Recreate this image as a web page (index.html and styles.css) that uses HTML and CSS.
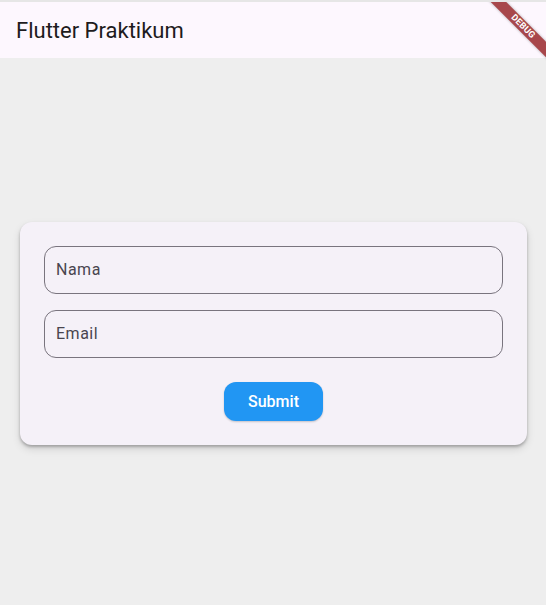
FILE: index.html
```html
<!DOCTYPE html>
<html>
<head>
<meta charset="utf-8">
<link rel="stylesheet" href="styles.css">
</head>
<body>
<div class="app">
  <header class="appbar">
    <h1 class="title">Flutter Praktikum</h1>
  </header>
  <main class="content">
    <form class="card">
      <div class="field"><span class="label">Nama</span></div>
      <div class="field"><span class="label">Email</span></div>
      <div class="actions">
        <button type="button" class="btn">Submit</button>
      </div>
    </form>
  </main>
  <div class="banner">DEBUG</div>
</div>
</body>
</html>
```
FILE: styles.css
```css
html, body {
  margin: 0;
  padding: 0;
  height: 100%;
}
body {
  background: #e6e6e6;
  font-family: Roboto, "Noto Sans", sans-serif;
  overflow: hidden;
}
.app {
  position: relative;
  margin-top: 2px;
  height: 603px;
  display: flex;
  flex-direction: column;
  background: #eeeeee;
  overflow: hidden;
}
.appbar {
  height: 56px;
  flex: none;
  box-sizing: border-box;
  background: #fdf7fe;
  display: flex;
  align-items: center;
  padding: 2px 16px 0;
}
.title {
  margin: 0;
  font-size: 22px;
  font-weight: 400;
  color: #1d1b20;
  line-height: 28px;
}
.content {
  flex: 1;
  display: flex;
  align-items: center;
  padding: 0 19px 0 20px;
}
.card {
  flex: 1;
  margin-top: 4px;
  background: #f5f1f8;
  border-radius: 12px;
  padding: 24px;
  display: flex;
  flex-direction: column;
  gap: 16px;
  box-shadow: 0 2px 3px rgba(0,0,0,0.25), 0 4px 8px rgba(0,0,0,0.12);
}
.field {
  height: 48px;
  box-sizing: border-box;
  border: 1px solid #79747e;
  border-radius: 12px;
  display: flex;
  align-items: center;
  padding: 0 11px;
}
.label {
  font-size: 16px;
  letter-spacing: 0.5px;
  color: #49454f;
  margin-top: -1px;
}
.actions {
  display: flex;
  justify-content: center;
  margin-top: 8px;
}
.btn {
  width: 99px;
  height: 39px;
  border: none;
  border-radius: 12px;
  background: #2196f3;
  color: #ffffff;
  font-family: Roboto, "Noto Sans", sans-serif;
  font-size: 16px;
  font-weight: 500;
  box-shadow: 0 1px 2px rgba(0,0,0,0.2);
}
.banner {
  position: absolute;
  left: 473px;
  top: 19px;
  width: 100px;
  height: 11px;
  line-height: 11px;
  transform: rotate(45deg);
  background: #a8474b;
  color: #ffffff;
  font-size: 9px;
  font-weight: 700;
  text-align: center;
  letter-spacing: 0.2px;
  box-shadow: 0 0 3px rgba(0,0,0,0.3);
}
```
